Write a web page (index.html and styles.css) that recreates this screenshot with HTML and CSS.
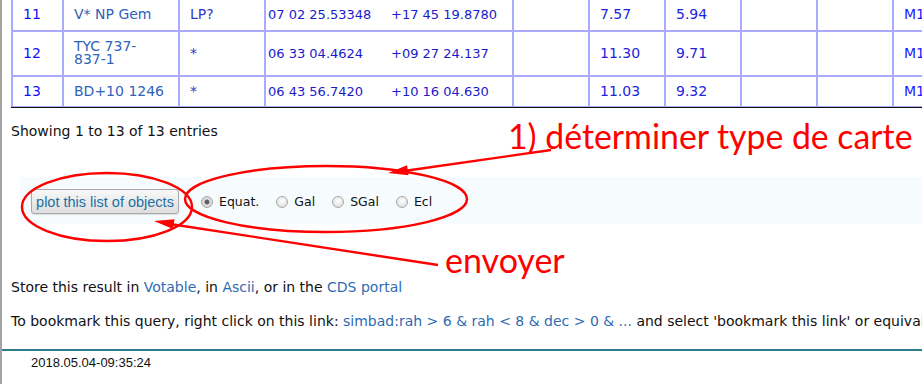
FILE: index.html
```html
<!DOCTYPE html>
<html lang="fr">
<head>
    <meta charset="UTF-8">
    <title>SIMBAD query result</title>
    <link rel="stylesheet" href="styles.css">
</head>
<body>
    <div class="page">
        <div class="results">
            <table class="objects">
                <colgroup>
                    <col class="c-num">
                    <col class="c-ident">
                    <col class="c-type">
                    <col class="c-coord">
                    <col class="c-mag">
                    <col class="c-mag">
                    <col class="c-mag">
                    <col class="c-mag">
                    <col class="c-mag">
                    <col class="c-sp">
                </colgroup>
                <tbody>
                    <tr class="first">
                        <td class="num">11</td>
                        <td class="ident">V* NP Gem</td>
                        <td class="otype">LP?</td>
                        <td class="coord"><span class="ra">07 02 25.53348</span><span>+17 45 19.8780</span></td>
                        <td></td>
                        <td class="mag">7.57</td>
                        <td class="mag">5.94</td>
                        <td></td>
                        <td></td>
                        <td class="sp">M1</td>
                    </tr>
                    <tr>
                        <td class="num">12</td>
                        <td class="ident">TYC 737-837-1</td>
                        <td class="otype">*</td>
                        <td class="coord"><span class="ra">06 33 04.4624</span><span>+09 27 24.137</span></td>
                        <td></td>
                        <td class="mag">11.30</td>
                        <td class="mag">9.71</td>
                        <td></td>
                        <td></td>
                        <td class="sp">M1</td>
                    </tr>
                    <tr>
                        <td class="num">13</td>
                        <td class="ident">BD+10 1246</td>
                        <td class="otype">*</td>
                        <td class="coord"><span class="ra">06 43 56.7420</span><span>+10 16 04.630</span></td>
                        <td></td>
                        <td class="mag">11.03</td>
                        <td class="mag">9.32</td>
                        <td></td>
                        <td></td>
                        <td class="sp">M1</td>
                    </tr>
                </tbody>
            </table>
        </div>

        <p class="info">Showing 1 to 13 of 13 entries</p>

        <form class="plot">
            <input class="btn" type="button" value="plot this list of objects">
            <div class="frames">
                <label><input type="radio" name="frame" value="equat" checked> Equat.</label>
                <label><input type="radio" name="frame" value="gal"> Gal</label>
                <label><input type="radio" name="frame" value="sgal"> SGal</label>
                <label><input type="radio" name="frame" value="ecl"> Ecl</label>
            </div>
        </form>

        <p class="line store">Store this result in <a href="#">Votable</a>, in <a href="#">Ascii</a>, or in the <a href="#">CDS portal</a></p>
        <p class="line">To bookmark this query, right click on this link: <a href="#">simbad:rah &gt; 6 &amp; rah &lt; 8 &amp; dec &gt; 0 &amp; ...</a> and select 'bookmark this link' or equivalent in the popup menu</p>

        <footer class="foot">2018.05.04-09:35:24</footer>

        <!-- annotations dessinées par-dessus la capture -->
        <svg class="marks" width="922" height="388" viewBox="0 0 922 388">
            <g fill="none" stroke="#ff0000" stroke-width="2.4">
                <ellipse cx="107" cy="211" rx="85" ry="34"/>
                <ellipse cx="326" cy="203" rx="141" ry="33"/>
                <line x1="551" y1="154" x2="404" y2="175"/>
                <line x1="438" y1="269" x2="170" y2="228"/>
            </g>
            <g fill="#ff0000">
                <polygon points="388,177 408.5,179.2 407.1,169.3"/>
                <polygon points="154,225 174.5,223.2 173,233"/>
            </g>
        </svg>
        <span class="note note-type">1) déterminer type de carte</span>
        <span class="note note-send">envoyer</span>
    </div>
</body>
</html>
```

FILE: styles.css
```css
* {
    margin: 0px;
    padding: 0px;
}

html, body {
    width: 922px;
    height: 388px;
    overflow: hidden;
}

body {
    background-color: white;
    font-family: "DejaVu Sans", Verdana, sans-serif;
    font-size: 14px;
    line-height: 17px;
    color: #111;
}

a {
    color: #2f6bb3;
    text-decoration: none;
}

.page {
    position: relative;
    height: 388px;
    border-left: 2px solid #a4a4a4;
}

/* tableau des objets */

.results {
    margin-top: -4px;
    margin-left: 9px;
    width: 1000px;
    border-bottom: 1px solid #111;
}

.objects {
    border-collapse: collapse;
    table-layout: fixed;
    width: 1000px;
}

.c-num { width: 51px; }
.c-ident { width: 116px; }
.c-type { width: 86px; }
.c-coord { width: 248px; }
.c-mag { width: 76px; }
.c-sp { width: 271px; }

.objects td {
    border: 2px solid #aaaaff;
    padding: 8px 10px;
    line-height: 13px;
    color: #1a1ae6;
    vertical-align: middle;
}

.objects tr.first td {
    padding-top: 10px;
}

.objects tr:last-child td {
    border-bottom-width: 1px;
}

.objects td.num {
    color: #1010ff;
}

.objects td.ident {
    color: #2f62b8;
    line-height: 13.5px;
}

.objects td.otype {
    color: #3535c8;
}

.objects td.coord {
    padding-left: 2px;
    font-size: 13px;
    color: #1a1acc;
    white-space: nowrap;
}

.objects .ra {
    display: inline-block;
    width: 123px;
}

.objects td.mag {
    color: #2222dd;
}

.objects td.sp {
    color: #1a1aff;
}

/* infos et formulaire */

.info {
    padding-top: 15px;
    margin-left: 9px;
}

.plot {
    display: flex;
    align-items: center;
    margin-top: 37px;
    margin-left: 18px;
    padding: 12px 0px 10px 11px;
    background-color: #f6fcfd;
}

.btn {
    width: 148px;
    height: 25px;
    border: 1px solid #a9a9a9;
    border-radius: 3px;
    background: linear-gradient(#f8f8f8, #dedede);
    box-shadow: 0px 1px 1px rgba(0, 0, 0, 0.12);
    color: #1d6fa3;
    font-family: "Liberation Sans", Arial, sans-serif;
    font-size: 14.5px;
}

.frames {
    display: flex;
    gap: 17px;
    margin-left: 22px;
    font-size: 12.5px;
    color: #111;
}

.frames label {
    display: flex;
    align-items: center;
    gap: 6px;
}

.frames input {
    appearance: none;
    box-sizing: border-box;
    width: 12px;
    height: 12px;
    border: 1px solid #a8a8a8;
    border-radius: 50%;
    background: radial-gradient(circle at 50% 40%, #ffffff, #d8d8d8);
    margin-top: 1px;
}

.frames input:checked {
    background: radial-gradient(circle, #555 0px, #666 2px, #e2e2e2 3px, #d0d0d0 6px);
}

.line {
    margin-left: 9px;
    white-space: nowrap;
}

.store {
    margin-top: 55px;
    margin-bottom: 17px;
}

.foot {
    margin-top: 19px;
    border-top: 2px solid #2f7c8a;
    padding: 4px 0px 0px 29px;
    font-family: "Liberation Sans", Arial, sans-serif;
    font-size: 13px;
    line-height: 15px;
    color: #111;
}

/* annotations */

.marks {
    position: absolute;
    left: -2px;
    top: 0px;
    pointer-events: none;
}

.note {
    position: absolute;
    color: #ff0000;
    font-family: Lato, "Open Sans", sans-serif;
    line-height: 1;
    white-space: nowrap;
}

.note-type {
    left: 506px;
    top: 124px;
    font-size: 33.8px;
}

.note-send {
    left: 443px;
    top: 247px;
    font-size: 34px;
}
```
